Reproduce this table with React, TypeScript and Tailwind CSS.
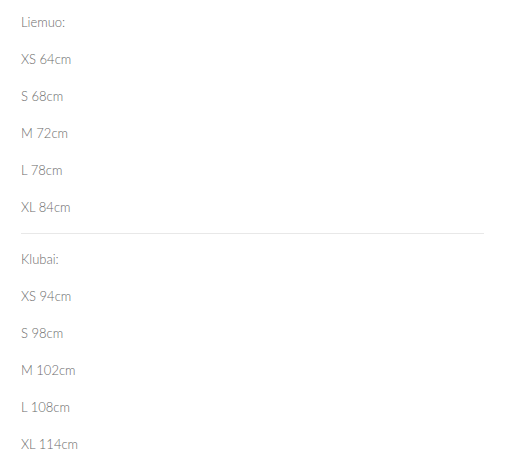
import React from "react";

const first = ["Liemuo:", "XS 64cm", "S 68cm", "M 72cm", "L 78cm", "XL 84cm"];
const second = ["Klubai:", "XS 94cm", "S 98cm", "M 102cm", "L 108cm", "XL 114cm"];

export default function App() {
  return (
    <div
      className="bg-white w-[510px] h-[463px] overflow-hidden pl-[21px] pr-[26px] pt-[12px] text-[13px] leading-[20px] text-[#6b6b6b] font-light"
      style={{ fontFamily: "Lato, 'Noto Sans', sans-serif" }}
    >
      <div className="flex flex-col gap-[17px]">
        {first.map((t) => (
          <p key={t}>{t}</p>
        ))}
      </div>
      <div className="h-px bg-[#e8e8e8] mt-[16px] mb-[15px]" />
      <div className="flex flex-col gap-[17px]">
        {second.map((t) => (
          <p key={t}>{t}</p>
        ))}
      </div>
    </div>
  );
}
